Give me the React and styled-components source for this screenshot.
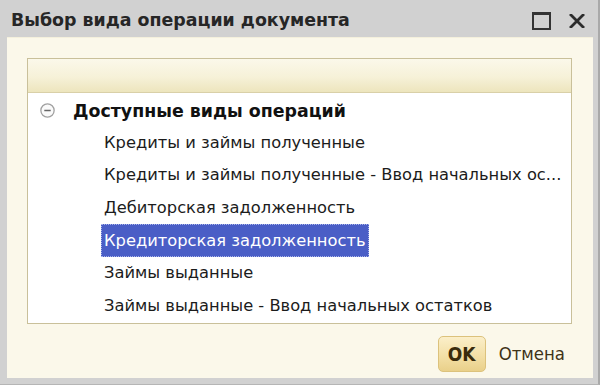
import React from 'react';
import styled, { createGlobalStyle } from 'styled-components';

const GlobalStyle = createGlobalStyle`
  html, body {
    margin: 0;
    padding: 0;
    background: #ffffff;
  }
  * {
    box-sizing: border-box;
  }
`;

const operations = [
  'Кредиты и займы полученные',
  'Кредиты и займы полученные - Ввод начальных ос...',
  'Дебиторская задолженность',
  'Кредиторская задолженность',
  'Займы выданные',
  'Займы выданные - Ввод начальных остатков',
];

export default function App() {
  const [selected, setSelected] = React.useState(3);

  return (
    <>
      <GlobalStyle />
      <Window>
        <TitleBar>
          <Title>Выбор вида операции документа</Title>
          <TitleButtons>
            <MaximizeBtn />
            <CloseBtn viewBox="0 0 16 14">
              <path d="M2 1 L14 13 M14 1 L2 13" stroke="#2c2c2c" strokeWidth="2.8" strokeLinecap="square" />
            </CloseBtn>
          </TitleButtons>
        </TitleBar>
        <Body>
          <List>
            <ListHeader />
            <Tree>
              <GroupRow>
                <Collapse viewBox="0 0 14 14">
                  <circle cx="7" cy="7" r="6.2" fill="#fafafa" stroke="#a0a0a0" strokeWidth="1.2" />
                  <path d="M4 7 H10" stroke="#666666" strokeWidth="1.4" />
                </Collapse>
                <GroupLabel>Доступные виды операций</GroupLabel>
              </GroupRow>
              {operations.map((name, i) => (
                <ItemRow key={i} onClick={() => setSelected(i)}>
                  <ItemLabel active={i === selected}>{name}</ItemLabel>
                </ItemRow>
              ))}
            </Tree>
          </List>
          <Footer>
            <OkButton>OK</OkButton>
            <CancelButton>Отмена</CancelButton>
          </Footer>
        </Body>
      </Window>
    </>
  );
}

const Window = styled.div`
  width: 600px;
  height: 385px;
  background: #d1d1d1;
  display: flex;
  flex-direction: column;
  border-right: 2px solid #a9a9a9;
  border-bottom: 1px solid #b5b5b5;
`;

const TitleBar = styled.div`
  height: 37px;
  flex-shrink: 0;
  display: flex;
  align-items: center;
  padding: 0 12px 0 11px;
`;

const Title = styled.div`
  flex: 1;
  font-family: "DejaVu Sans", sans-serif;
  font-weight: bold;
  font-size: 17.4px;
  color: #262626;
  padding-top: 2px;
`;

const TitleButtons = styled.div`
  display: flex;
  align-items: center;
  gap: 18px;
  padding-top: 4px;
  margin-right: 1px;
`;

const MaximizeBtn = styled.div`
  width: 19px;
  height: 18px;
  border: 2px solid #333333;
  border-top-width: 3px;
`;

const CloseBtn = styled.svg`
  width: 16px;
  height: 14px;
`;

const Body = styled.div`
  flex: 1;
  margin: 0 5px 6px 7px;
  background: #fbf8ea;
  border-top: 1px solid #f4f0dc;
  padding: 20px 21px 0 20px;
  display: flex;
  flex-direction: column;
`;

const List = styled.div`
  height: 266px;
  background: #ffffff;
  border: 1px solid #c9c09a;
  display: flex;
  flex-direction: column;
  overflow: hidden;
`;

const ListHeader = styled.div`
  height: 34px;
  flex-shrink: 0;
  background: linear-gradient(#fbf8ea 0%, #f6f1d8 55%, #ede5bd 100%);
  border-bottom: 1px solid #d9d0a8;
`;

const Tree = styled.div`
  padding-top: 2px;
  font-family: "DejaVu Sans", sans-serif;
  font-size: 16.3px;
  color: #1c1c1c;
`;

const GroupRow = styled.div`
  height: 31px;
  display: flex;
  align-items: center;
  padding-left: 12px;
`;

const Collapse = styled.svg`
  width: 15px;
  height: 15px;
  margin-right: 18px;
`;

const GroupLabel = styled.span`
  font-weight: bold;
  font-size: 17.4px;
  color: #111111;
`;

const ItemRow = styled.div`
  height: 32.6px;
  display: flex;
  align-items: center;
  padding-left: 73px;
  white-space: nowrap;
  cursor: default;
`;

const ItemLabel = styled.span`
  display: inline-flex;
  align-items: center;
  height: 33px;
  padding: 0 2px;
  background: ${({ active }) => (active ? '#4a5ec6' : 'transparent')};
  color: ${({ active }) => (active ? '#ffffff' : '#1c1c1c')};
  border: 1px dotted ${({ active }) => (active ? '#a9b4ea' : 'transparent')};
`;

const Footer = styled.div`
  flex: 1;
  display: flex;
  align-items: center;
  justify-content: flex-end;
  gap: 13px;
  padding: 5px 7px 0 0;
`;

const OkButton = styled.button`
  width: 48px;
  height: 36px;
  border: 1px solid #dcc27c;
  border-radius: 5px;
  background: linear-gradient(#fbefc9 0%, #f2dea3 60%, #e9d08a 100%);
  font-family: "DejaVu Sans Condensed", "DejaVu Sans", sans-serif;
  font-weight: bold;
  font-size: 19px;
  color: #3a2c0c;
  padding: 0;
`;

const CancelButton = styled.button`
  border: none;
  background: transparent;
  font-family: "DejaVu Sans Condensed", "DejaVu Sans", sans-serif;
  font-size: 18.4px;
  color: #3f3317;
  padding: 0;
`;
